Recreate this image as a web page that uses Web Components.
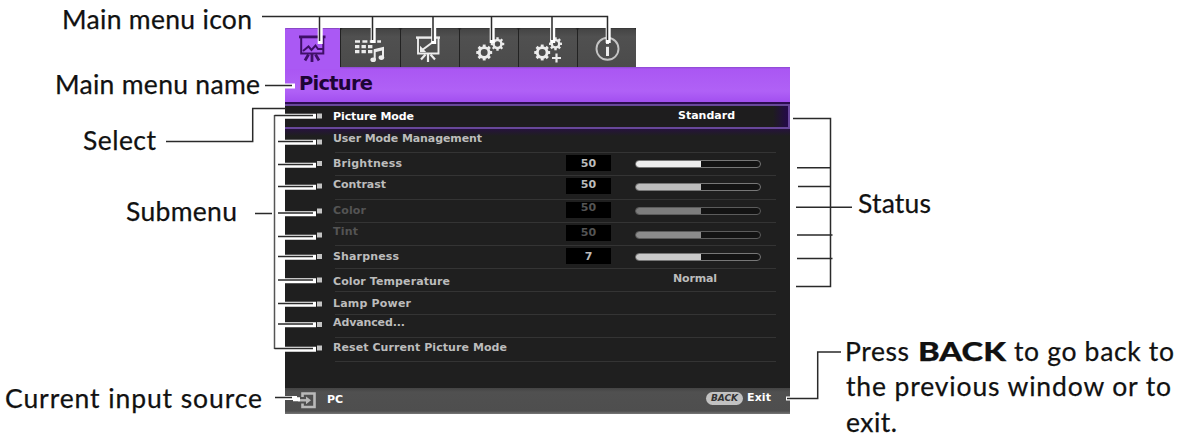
<!DOCTYPE html>
<html lang="en">
<head>
<meta charset="utf-8">
<title>Projector OSD menu</title>
<style>
html,body{margin:0;background:#fff}
body{width:1179px;height:437px;overflow:hidden}
</style>
</head>
<body>
<osd-figure></osd-figure>
<script>
const define = (name, html, setup) => customElements.define(name, class extends HTMLElement {
  connectedCallback() {
    if (this.shadowRoot) return;
    const t = document.createElement('template');
    t.innerHTML = typeof html === 'function' ? html(this) : html;
    this.attachShadow({mode: 'open'}).appendChild(t.content.cloneNode(true));
    if (setup) setup(this);
  }
});

// Text that spans the width given in its w attribute: tracked, or widened when it has "stretch".
define('fit-text', `<style>:host{display:inline-block;white-space:nowrap}span{display:inline-block;transform-origin:0 50%}</style><span><slot></slot></span>`, el => {
  const w = parseFloat(el.getAttribute('w'));
  const s = el.shadowRoot.querySelector('span');
  const own = s.getBoundingClientRect().width;
  if (el.hasAttribute('stretch')) {
    s.style.transform = `scaleX(${w / own})`;
    s.style.marginRight = (w - own).toFixed(3) + 'px';
    return;
  }
  const d = (w - own) / Math.max(1, el.textContent.length - 1);
  s.style.letterSpacing = d.toFixed(3) + 'px';
  s.style.marginRight = (-d).toFixed(3) + 'px';
});

define('callout-label', `<style>
:host{display:block;font:26.5px/30px Lato,sans-serif;color:#111;height:30px;white-space:nowrap;-webkit-text-stroke:.25px #111}
</style><slot></slot>`);

const gear = (cx, cy, r, k, w) => `<g stroke="currentColor" fill="none"><circle cx="${cx}" cy="${cy}" r="${r}" stroke-width="${w}"/>` +
  [...Array(8)].map((_, i) => { const a = i * Math.PI / 4, c = Math.cos(a), s = Math.sin(a);
    return `<path stroke-width="${k}" d="M${cx + c * r} ${cy + s * r}L${cx + c * (r + w * .5 + 1.6)} ${cy + s * (r + w * .5 + 1.6)}"/>`; }).join('') + '</g>';
const ICONS = {
  picture: `<path d="M0 2.9H26.5" stroke-width="2.8"/><path d="M2.2 3V19.5H24.3V3" stroke-width="2"/><path d="M13 20V28M9.5 20.5L6 26.5M16.5 20.5L20 26.5" stroke-width="2.8"/><path d="M4 17L9.5 12.5L12.5 16L16.5 11.5L19 15L24 15" stroke-width="2"/>`,
  audio: `<path d="M0 7.5H26" stroke-dasharray="5 2.4" stroke-width="2.3"/><path d="M0 12.7H17.5M0 17.7H17.5" stroke-dasharray="4.4 2.1" stroke-width="3.2"/><path d="M19.7 25.5V16L28 14V23" stroke-width="2"/><path d="M19.7 17L28 15" stroke-width="2.4"/><ellipse cx="18.2" cy="25.8" rx="2.8" ry="2.3" fill="currentColor" stroke="none"/><ellipse cx="26.4" cy="23.6" rx="2.8" ry="2.3" fill="currentColor" stroke="none"/>`,
  display: `<path d="M1 3.6H25" stroke-width="2.4"/><path d="M3 3V19.5H23.5V3" stroke-width="1.9"/><path d="M13 20V28M10.5 20.5L6 25.5M15.5 20.5L20 25.5" stroke-width="2.2"/><path d="M6.5 16.5L18 8" stroke-width="2"/><path d="M5 11.8V18H11.2Z" fill="currentColor" stroke="none"/>`,
  gears: gear(8.2, 18.5, 4.9, 2.9, 2.9) + gear(21.5, 10, 3.9, 2.4, 2.5),
  gearsplus: gear(8.2, 18.5, 4.9, 2.9, 2.9) + gear(21.5, 9.8, 3.7, 2.4, 2.4) + `<path d="M22.5 19.5V28.5M18 24H27" stroke-width="2.2"/>`,
  info: `<circle cx="14.5" cy="14.8" r="11" stroke-width="1.9" stroke="#c4c4c4"/><path d="M14.5 12.8V22" stroke-width="3"/><path d="M14.5 7V10" stroke-width="3"/>`,
  input: `<path d="M4.5 5V1.5H16.5V15H4.5V11.5" stroke-width="2.6"/><path d="M0 8.3H9" stroke-width="2.4"/><path d="M8 4.4L13 8.3L8 12.2Z" fill="currentColor" stroke="none"/>`
};
define('osd-icon', el => `<style>:host{display:block;line-height:0}svg{display:block;overflow:visible}</style>
<svg width="30" height="30" viewBox="0 0 30 30" fill="none" stroke="currentColor">${ICONS[el.getAttribute('name')]}</svg>`);

define('osd-tab', `<style>
:host{display:block;box-sizing:border-box;height:39px;padding:5px 0 0 var(--ix,14px);background:linear-gradient(#444,#505050 20%,#4b4b4b);border-top:1px solid #3a3a3a;color:#ececec;border-radius:2px 2px 0 0}
:host([active]){background:#aa59f4;color:#3f0f68;border-color:#8a48c6}
</style><slot></slot>`);

define('osd-slider', el => `<style>
:host{display:block;box-sizing:border-box;width:126px;height:8px;border:1.5px solid #777;border-radius:4px;background:#131313;overflow:hidden}
i{display:block;width:52.5%;height:100%;background:${el.getAttribute('tone')}}
:host([dim]){border-color:#5c5c5c}
</style><i></i>`);

define('osd-row', el => {
  const g = (k, d) => el.getAttribute(k) ?? d;
  const v = g('value'), s = g('status');
  return `<style>
:host{display:grid;grid-template-columns:233px 45px 24px 126px 14px;box-sizing:border-box;padding-left:48px;height:${g('h')}px;align-items:start;
 font:bold 11px/12px "DejaVu Sans",sans-serif;color:#bcbcbc;position:relative}
:host([dim]){color:#545454}
:host([selected]){color:#fff;border:2px solid #68479a;border-width:2px 2px 2px 0;background:linear-gradient(90deg,#0000 97%,#24094a),#1e1d1e}
:host(:not([selected]))::after{content:"";position:absolute;left:50px;right:14px;bottom:0;height:1px;background:#343434}
.n{margin-top:${g('y')}px;height:12px}
.v{background:#000;height:16px;margin-top:2px;text-align:center;grid-column:2}
.v span{display:block;padding-top:${g('vy', 0)}px}
osd-slider{grid-column:4;margin-top:${g('sy', 0)}px}
.s{grid-column:4;margin:${g('ty', 0)}px 0 0 ${g('tx', 0)}px}
</style><div class="n"><fit-text w="${g('w')}">${g('label')}</fit-text></div>` +
  (v ? `<div class="v"><span>${v}</span></div><osd-slider ${el.hasAttribute('dim') ? 'dim' : ''} tone="${g('tone')}"></osd-slider>` : '') +
  (s ? `<div class="s"><fit-text w="${g('sw')}">${s}</fit-text></div>` : '');
});

define('osd-menu', `<style>
:host{display:block;width:505px;padding-top:28px}
nav{display:grid;grid-template-columns:55px 59px 58px 58px 58px 58px;column-gap:1px;width:351px;background:linear-gradient(90deg,#aa59f4 55px,#222 55px)}
header{box-sizing:border-box;height:35px;padding:5px 0 0 14px;background:linear-gradient(90deg,#aa59f4 55px,#0000 55px) 0 0/100% 2px no-repeat,linear-gradient(#8b48cf,#aa57f3 2px,#b061f6 24px,#a24ff0);font:bold 19.5px/24px "DejaVu Sans",sans-serif;color:#1d0435}
main{height:286px;background:linear-gradient(#2b0c50 0,#2b0c50 3px,#1f1f1f 3px);box-sizing:border-box;padding-top:2px}
.glow{background:linear-gradient(#26133c,#1f1f1f 7px)}
footer{display:grid;grid-template-columns:28px 379px 37px 1fr;height:26px;box-sizing:border-box;padding-left:14px;background:linear-gradient(#444,#505050 4px,#4e4e4e 23px,#777);font:bold 11px/12px "DejaVu Sans",sans-serif;color:#fff;align-items:start}
footer osd-icon{color:#b9b9b9;margin-top:4px;height:18px;overflow:visible;margin-left:-1px}
.pc{margin-top:6px}.exit{margin:3.5px 0 0 4px}
.back{height:13px;margin-top:4px;border-radius:7px;background:#c2c2c2;color:#333;font:italic bold 9px/13px "DejaVu Sans",sans-serif;text-align:center}
</style>
<nav>
<osd-tab active><osd-icon name="picture"></osd-icon></osd-tab>
<osd-tab><osd-icon name="audio"></osd-icon></osd-tab>
<osd-tab><osd-icon name="display"></osd-icon></osd-tab>
<osd-tab style="--ix:16px"><osd-icon name="gears"></osd-icon></osd-tab>
<osd-tab style="--ix:15px"><osd-icon name="gearsplus"></osd-icon></osd-tab>
<osd-tab style="--ix:15px"><osd-icon name="info"></osd-icon></osd-tab>
</nav>
<header><fit-text w="74">Picture</fit-text></header>
<main>
<osd-row selected h="25" y="5" label="Picture Mode" w="81" status="Standard" sw="57" ty="3.5" tx="43"></osd-row>
<osd-row class="glow" h="24" y="4" label="User Mode Management" w="149"></osd-row>
<osd-row h="23" y="4.5" label="Brightness" w="69" value="50" vy="2.5" sy="7" tone="#eee"></osd-row>
<osd-row h="24" y="3" label="Contrast" w="53" value="50" vy="1" sy="7" tone="#bdbdbd"></osd-row>
<osd-row dim h="23" y="5" label="Color" w="33" value="50" vy="0" sy="7" tone="#7d7d7d"></osd-row>
<osd-row dim h="23" y="3" label="Tint" w="25" value="50" vy="1.5" sy="8" tone="#8c8c8c"></osd-row>
<osd-row h="23" y="5" label="Sharpness" w="66" value="7" vy="3" sy="7" tone="#c9c9c9"></osd-row>
<osd-row h="23" y="7" label="Color Temperature" w="117" status="Normal" sw="44" ty="3.5" tx="38"></osd-row>
<osd-row h="23" y="6" label="Lamp Power" w="78"></osd-row>
<osd-row h="23" y="2" label="Advanced..." w="72"></osd-row>
<osd-row h="24" y="4" label="Reset Current Picture Mode" w="174"></osd-row>
</main>
<footer><osd-icon name="input"></osd-icon><div class="pc"><fit-text w="16">PC</fit-text></div><div class="back"><fit-text w="27">BACK</fit-text></div><div class="exit"><fit-text w="24">Exit</fit-text></div></footer>`);

// Leader lines drawn over the menu: a white casing where they cross it, then the dark stroke.
define('leader-lines', `<style>:host{position:absolute;inset:0;pointer-events:none}svg{display:block}</style><svg width="1179" height="437"></svg>`, el => {
  const black = [], white = [], grey = [];
  [[319.5,42],[372.5,41],[433,42],[491.5,41],[552,41],[607.5,41]].forEach(([x, y]) => {
    black.push(`M${x} 16.5V${y - 1}`); white.push(`M${x + .7} 28V${y + 2}`);
  });
  black.push('M262 16.5H608.2', 'M265 85.5H292', 'M166 141.5H252.7V108.5H286');
  white.push('M285 86H295');
  [[115.5,116],[141.5,142],[164.5,163.5],[186.5,186],[213,211],[236.5,235],[256.5,256.5],[280,280],[303.5,304],[324,324.5],[348.5,348]].forEach(([y, d], i) => {
    black.push(`M${i % 10 ? 278 : 274.5} ${y}H313`);
    white.push(`M${i % 10 ? 279 : 276} ${y + .7}H316`);
    grey.push(`M317 ${d}H322`);
  });
  black.push('M255 213.5H272', 'M275 397.5H292');
  white.push('M285 398H295V399.3H300');
  black.push('M793 118.5H830.5V286.5H796', 'M797 167.7H830', 'M798 186.5H830', 'M796 207.2H852', 'M797 235H832.5', 'M797 258.5H832.5', 'M787 398.5H817.7V352H841');
  white.push('M786 398.5H791');
  el.shadowRoot.querySelector('svg').innerHTML =
    `<g fill="none"><path stroke="#fff" stroke-width="5" d="${white.slice(0, -2).join('')}"/><path stroke="#fff" stroke-width="4" d="${white.slice(-2).join('')}"/>
    <path stroke="#c4c4c4" stroke-width="5" d="${grey.join('')}"/>
    <path stroke="#555" stroke-width="1.5" d="M274.5 115V349"/><path stroke="#2a2a2a" stroke-width="1.5" d="${black.join('')}"/></g>`;
});

define('osd-figure', `<style>
:host{display:grid;grid-template-columns:285px 505px 1fr;position:relative;width:1179px;height:437px;overflow:hidden;background:#fff}
.l,.r{display:flex;flex-direction:column;align-items:flex-start;height:437px}
</style>
<div class="l">
<callout-label style="margin:4px 0 0 62px"><fit-text w="190">Main menu icon</fit-text></callout-label>
<callout-label style="margin:35px 0 0 55px"><fit-text w="205">Main menu name</fit-text></callout-label>
<callout-label style="margin:26px 0 0 83px"><fit-text w="73">Select</fit-text></callout-label>
<callout-label style="margin:41px 0 0 126px"><fit-text w="111">Submenu</fit-text></callout-label>
<callout-label style="margin:157px 0 0 5px"><fit-text w="257">Current input source</fit-text></callout-label>
</div>
<osd-menu></osd-menu>
<div class="r">
<callout-label style="margin:188px 0 0 68px"><fit-text w="73">Status</fit-text></callout-label>
<callout-label style="margin:118px 0 0 55px;display:flex"><fit-text w="64" style="margin-right:9px">Press</fit-text><fit-text stretch w="88" style="font-weight:900;margin-right:8px">BACK</fit-text><fit-text w="160">to go back to</fit-text></callout-label>
<callout-label style="margin:4.5px 0 0 56px"><fit-text w="325">the previous window or to</fit-text></callout-label>
<callout-label style="margin:6.5px 0 0 56px"><fit-text w="51">exit.</fit-text></callout-label>
</div>
<leader-lines></leader-lines>`);
</script>
</body>
</html>
